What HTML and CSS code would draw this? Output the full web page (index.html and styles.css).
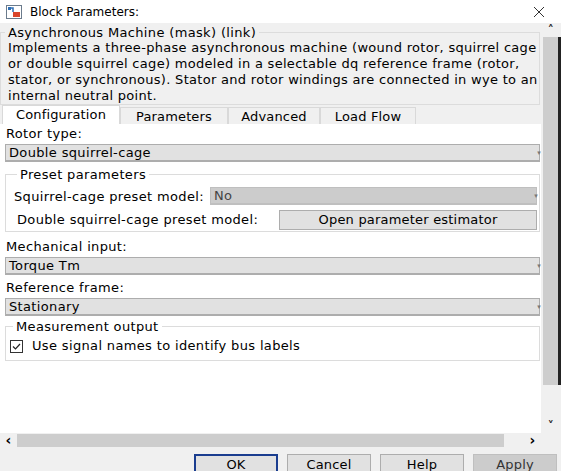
FILE: index.html
```html
<!DOCTYPE html>
<html lang="en">
<head>
  <meta charset="UTF-8">
  <title>Block Parameters</title>
  <link rel="stylesheet" href="styles.css">
</head>
<body>
  <div class="window">

    <!-- Title bar -->
    <div class="titlebar">
      <svg class="app-icon" width="16" height="14" viewBox="0 0 16 14">
        <rect x="0.5" y="0.5" width="15" height="13" fill="#ffffff" stroke="#6b7b8c"/>
        <path d="M2 3 H7 V7" fill="none" stroke="#2f6fb5" stroke-width="1.5"/>
        <rect x="2" y="2" width="3" height="3" fill="#2f6fb5"/>
        <rect x="7" y="7" width="7" height="5" fill="#d9452b"/>
      </svg>
      <span class="title">Block Parameters:</span>
      <svg class="close" width="12" height="12" viewBox="0 0 12 12">
        <path d="M1 1 L11 11 M11 1 L1 11" stroke="#333" stroke-width="1"/>
      </svg>
    </div>

    <div class="body">
      <div class="main">

        <fieldset class="desc">
          <legend>Asynchronous Machine (mask) (link)</legend>
          <p class="desc-text">Implements a three-phase asynchronous machine (wound rotor, squirrel cage<br>or double squirrel cage) modeled in a selectable dq reference frame (rotor,<br>stator, or synchronous). Stator and rotor windings are connected in wye to an<br>internal neutral point.</p>
        </fieldset>

        <div class="tabs">
          <div class="tab tab-active">Configuration</div>
          <div class="tab tab-params">Parameters</div>
          <div class="tab tab-adv">Advanced</div>
          <div class="tab tab-flow">Load Flow</div>
        </div>

        <div class="panel">
          <div class="label">Rotor type:</div>
          <div class="select">Double squirrel-cage<span class="arrow">&#9662;</span></div>

          <fieldset class="group group-preset">
            <legend>Preset parameters</legend>
            <div class="row">
              <span class="row-label">Squirrel-cage preset model:</span>
              <div class="select select-disabled">No<span class="arrow">&#9662;</span></div>
            </div>
            <div class="row row-double">
              <span class="row-label">Double squirrel-cage preset model:</span>
              <button class="push">Open parameter estimator</button>
            </div>
          </fieldset>

          <div class="label">Mechanical input:</div>
          <div class="select">Torque Tm<span class="arrow">&#9662;</span></div>

          <div class="label">Reference frame:</div>
          <div class="select">Stationary<span class="arrow">&#9662;</span></div>

          <fieldset class="group group-meas">
            <legend>Measurement output</legend>
            <label class="check">
              <svg class="checkbox" width="13" height="13" viewBox="0 0 13 13">
                <rect x="0.5" y="0.5" width="12" height="12" fill="#fff" stroke="#333"/>
                <path d="M3 6.5 L5.5 9 L10 4" fill="none" stroke="#222" stroke-width="1.2"/>
              </svg>
              Use signal names to identify bus labels
            </label>
          </fieldset>
        </div>
      </div>

      <!-- Vertical scrollbar -->
      <div class="vscroll">
        <div class="vs-arrow">&#708;</div>
        <div class="vs-track"><div class="vs-thumb"></div></div>
        <div class="vs-arrow">&#709;</div>
      </div>
    </div>

    <!-- Horizontal scrollbar -->
    <div class="hscroll">
      <div class="hs-arrow">&lsaquo;</div>
      <div class="hs-track"><div class="hs-thumb"></div></div>
      <div class="hs-arrow">&rsaquo;</div>
      <div class="hs-corner"></div>
    </div>

    <div class="buttons">
      <button class="btn btn-default">OK</button>
      <button class="btn">Cancel</button>
      <button class="btn">Help</button>
      <button class="btn btn-apply">Apply</button>
    </div>
  </div>
</body>
</html>
```

FILE: styles.css
```css
body {
  margin: 0;
  padding: 0;
  font-family: "DejaVu Sans", Verdana, sans-serif;
  font-size: 13px;
  letter-spacing: 0.35px;
  color: #000;
  background: #f0f0f0;
}

.window {
  width: 561px;
  height: 471px;
  overflow: hidden;
  background: #f0f0f0;
  display: flex;
  flex-direction: column;
}

/* Title bar */
.titlebar {
  height: 23px;
  flex: none;
  background: #ffffff;
  display: flex;
  align-items: center;
  padding-left: 6px;
}

.app-icon {
  margin-right: 8px;
}

.title {
  font-size: 12px;
  letter-spacing: 0;
}

.close {
  margin-left: auto;
  margin-right: 16px;
}

/* Body */
.body {
  height: 410px;
  flex: none;
  display: flex;
}

.main {
  width: 541px;
  display: flex;
  flex-direction: column;
}

fieldset {
  margin: 0;
  min-width: 0;
}

legend {
  padding: 0 3px;
  line-height: 15px;
}

.desc {
  margin: 2px 1px 0 0;
  padding: 0 0 0 7px;
  border: 1px solid #dcdcdc;
  height: 78px;
  overflow: hidden;
}

.desc legend {
  margin-left: -3px;
}

.desc-text {
  margin: 0;
  line-height: 16px;
  white-space: nowrap;
  letter-spacing: 0.3px;
}

/* Tabs */
.tabs {
  display: flex;
  height: 18px;
  margin-top: 1px;
  padding-left: 2px;
  align-items: flex-end;
  letter-spacing: 0.15px;
}

.tab {
  height: 17px;
  box-sizing: border-box;
  border: 1px solid #d9d9d9;
  border-bottom: none;
  background: #f0f0f0;
  text-align: center;
  line-height: 17px;
}

.tab-active {
  height: 19px;
  width: 118px;
  background: #ffffff;
  line-height: 18px;
}

.tab-params { width: 108px; }
.tab-adv { width: 92px; }
.tab-flow { width: 96px; }

/* Panel */
.panel {
  flex: 1;
  background: #ffffff;
  padding: 2px 1px 0 5px;
}

.label {
  line-height: 16px;
  margin-left: 1px;
}

.select {
  position: relative;
  height: 18px;
  box-sizing: border-box;
  margin-top: 2px;
  background: #e1e1e1;
  border: 1px solid #adadad;
  border-bottom-width: 2px;
  padding-left: 3px;
  line-height: 15px;
}

.arrow {
  position: absolute;
  right: -2px;
  top: 1px;
  font-size: 7px;
  color: #777;
}

.group {
  border: 1px solid #dcdcdc;
  padding: 5px 2px 2px 8px;
  margin-top: 5px;
}

.group legend {
  margin-left: 3px;
}

.row {
  display: flex;
  align-items: center;
  height: 18px;
}

.row-double {
  margin-top: 5px;
  height: 19px;
  padding-left: 3px;
}

.row-label {
  flex: none;
}

.row .select {
  margin: 0 0 0 6px;
  flex: 1;
}

.select-disabled {
  background: #cccccc;
  border-color: #bfbfbf;
  color: #444;
}

.push {
  margin-left: auto;
  width: 258px;
  height: 20px;
  font-family: inherit;
  font-size: 13px;
  letter-spacing: 0.2px;
  color: #000;
  background: #e1e1e1;
  border: 1px solid #adadad;
  padding: 0;
}

.group-preset + .label {
  margin-top: 7px;
}

.select + .label {
  margin-top: 5px;
}

.group-meas {
  margin-top: 3px;
  padding: 4px 0 6px 4px;
}

.check {
  display: flex;
  align-items: center;
  line-height: 16px;
}

.checkbox {
  margin-right: 9px;
}

/* Vertical scrollbar */
.vscroll {
  width: 20px;
  display: flex;
  flex-direction: column;
  background: #f0f0f0;
}

.vs-arrow {
  height: 14px;
  text-align: center;
  font-size: 12px;
  line-height: 14px;
  font-weight: bold;
  color: #222;
}

.vs-track {
  flex: 1;
}

.vs-thumb {
  margin-left: 2px;
  width: 15px;
  height: 348px;
  background: #cdcdcd;
  border-right: 3px solid #222;
}

/* Horizontal scrollbar */
.hscroll {
  height: 14px;
  flex: none;
  display: flex;
  align-items: center;
}

.hs-arrow {
  width: 17px;
  text-align: center;
  font-weight: bold;
  font-size: 14px;
  line-height: 14px;
}

.hs-track {
  width: 507px;
  height: 13px;
}

.hs-thumb {
  width: 487px;
  height: 13px;
  background: #cdcdcd;
}

.hs-corner {
  flex: 1;
}

/* Dialog buttons */
.buttons {
  flex: 1;
  display: flex;
  justify-content: flex-end;
  align-items: flex-start;
  padding: 7px 4px 0 0;
  gap: 9px;
}

.btn {
  width: 84px;
  height: 20px;
  font-family: inherit;
  font-size: 13px;
  letter-spacing: 0.2px;
  color: #000;
  background: #e1e1e1;
  border: 1px solid #adadad;
  padding: 0;
}

.btn-default {
  border: 2px solid #1a3d8f;
}

.btn-apply {
  background: #cccccc;
  border-color: #bfbfbf;
  color: #333;
}
```
